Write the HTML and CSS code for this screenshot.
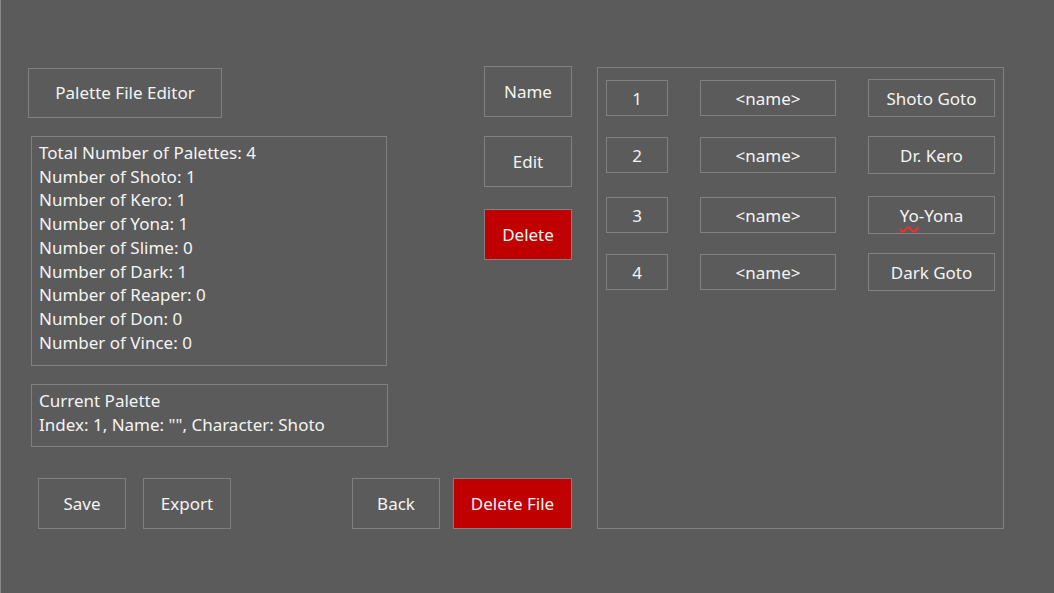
FILE: index.html
```html
<!DOCTYPE html>
<html>
<head>
<meta charset="utf-8">
<link rel="stylesheet" href="styles.css">
</head>
<body>
<div class="app">
  <div class="left-area">
    <div class="top">
      <div class="left-col">
        <div class="box title">Palette File Editor</div>
        <div class="box stats">
          <div>Total Number of Palettes: 4</div>
          <div>Number of Shoto: 1</div>
          <div>Number of Kero: 1</div>
          <div>Number of Yona: 1</div>
          <div>Number of Slime: 0</div>
          <div>Number of Dark: 1</div>
          <div>Number of Reaper: 0</div>
          <div>Number of Don: 0</div>
          <div>Number of Vince: 0</div>
        </div>
        <div class="box current">
          <div>Current Palette</div>
          <div>Index: 1, Name: "", Character: Shoto</div>
        </div>
      </div>
      <div class="mid-col">
        <div class="box btn btn-name">Name</div>
        <div class="box btn btn-edit">Edit</div>
        <div class="box btn red btn-delete">Delete</div>
      </div>
    </div>
    <div class="bottom">
      <div class="box btn btn-save">Save</div>
      <div class="box btn btn-export">Export</div>
      <div class="box btn btn-back">Back</div>
      <div class="box btn red btn-delfile">Delete File</div>
    </div>
  </div>
  <div class="panel">
    <div class="row r1">
      <div class="box idx">1</div>
      <div class="box nm">&lt;name&gt;</div>
      <div class="box ch">Shoto Goto</div>
    </div>
    <div class="row r2">
      <div class="box idx">2</div>
      <div class="box nm">&lt;name&gt;</div>
      <div class="box ch">Dr. Kero</div>
    </div>
    <div class="row r3">
      <div class="box idx">3</div>
      <div class="box nm">&lt;name&gt;</div>
      <div class="box ch"><span class="typo">Yo</span>-Yona</div>
    </div>
    <div class="row r4">
      <div class="box idx">4</div>
      <div class="box nm">&lt;name&gt;</div>
      <div class="box ch">Dark Goto</div>
    </div>
  </div>
</div>
</body>
</html>
```
FILE: styles.css
```css
html, body {
  margin: 0;
  padding: 0;
  background: #5b5b5b;
}
body {
  width: 1054px;
  height: 593px;
  box-sizing: border-box;
  border-left: 1px solid #8a8a8a;
  font-family: "Noto Sans", "Open Sans", sans-serif;
  font-size: 17px;
  color: #f4f4f4;
  overflow: hidden;
}
.app {
  display: flex;
  padding-top: 66px;
  padding-left: 27px;
}
.box {
  box-sizing: border-box;
  border: 1px solid #808080;
}
.left-area {
  width: 544px;
  display: flex;
  flex-direction: column;
}
.top {
  display: flex;
  justify-content: space-between;
}
.left-col {
  display: flex;
  flex-direction: column;
  padding-top: 2px;
}
.title {
  width: 194px;
  height: 50px;
  display: flex;
  align-items: center;
  justify-content: center;
  padding-bottom: 1px;
}
.stats {
  margin-top: 18px;
  margin-left: 3px;
  width: 356px;
  height: 230px;
  padding: 4px 0 0 7px;
  line-height: 23.7px;
}
.current {
  margin-top: 18px;
  margin-left: 3px;
  width: 357px;
  height: 63px;
  padding: 4px 0 0 7px;
  line-height: 23.7px;
}
.mid-col {
  display: flex;
  flex-direction: column;
}
.btn {
  width: 88px;
  height: 51px;
  display: flex;
  align-items: center;
  justify-content: center;
  padding-bottom: 1px;
}
.btn-edit { margin-top: 19px; }
.btn-delete { margin-top: 22px; }
.red {
  background: #c00000;
}
.bottom {
  display: flex;
  margin-top: 31px;
  padding-left: 10px;
}
.btn-export { margin-left: 17px; }
.btn-back { margin-left: 121px; }
.btn-delfile { margin-left: 13px; width: 119px; }
.panel {
  margin-left: 25px;
  margin-top: 1px;
  width: 407px;
  height: 462px;
  box-sizing: border-box;
  border: 1px solid #808080;
  padding: 11px 0 0 8px;
  display: flex;
  flex-direction: column;
}
.row {
  display: flex;
  align-items: center;
  height: 38px;
}
.r2 { margin-top: 19px; }
.r3 { margin-top: 22px; }
.r4 { margin-top: 19px; }
.idx {
  width: 62px;
  height: 36px;
  display: flex;
  align-items: center;
  justify-content: center;
}
.nm {
  margin-left: 32px;
  width: 136px;
  height: 36px;
  display: flex;
  align-items: center;
  justify-content: center;
}
.ch {
  margin-left: 32px;
  width: 127px;
  height: 38px;
  display: flex;
  align-items: center;
  justify-content: center;
}
.typo {
  text-decoration: underline wavy #ff2a2a;
  text-decoration-thickness: 1.5px;
  text-underline-offset: 4px;
}
```
